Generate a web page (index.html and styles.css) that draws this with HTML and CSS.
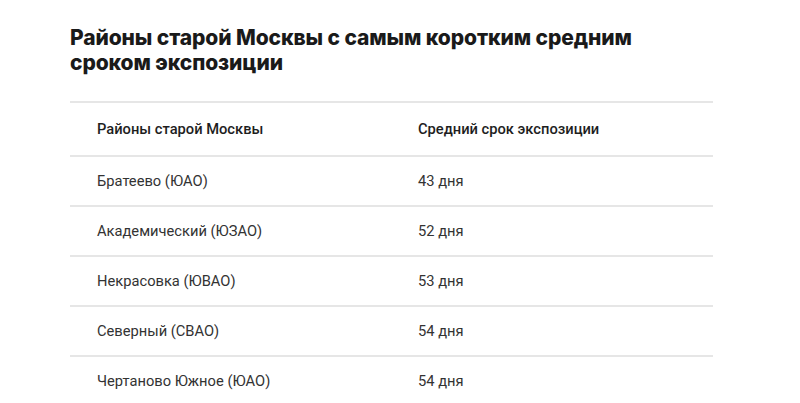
FILE: index.html
```html
<!DOCTYPE html>
<html lang="ru">
<head>
<meta charset="utf-8">
<link rel="stylesheet" href="styles.css">
</head>
<body>
<main class="block">
  <h2 class="title">Районы старой Москвы с самым коротким средним сроком экспозиции</h2>
  <table class="data">
    <colgroup><col class="w1"><col></colgroup>
    <thead>
      <tr><th>Районы старой Москвы</th><th>Средний срок экспозиции</th></tr>
    </thead>
    <tbody>
      <tr><td>Братеево (ЮАО)</td><td>43 дня</td></tr>
      <tr><td>Академический (ЮЗАО)</td><td>52 дня</td></tr>
      <tr><td>Некрасовка (ЮВАО)</td><td>53 дня</td></tr>
      <tr><td>Северный (СВАО)</td><td>54 дня</td></tr>
      <tr><td>Чертаново Южное (ЮАО)</td><td>54 дня</td></tr>
    </tbody>
  </table>
</main>
</body>
</html>
```
FILE: styles.css
```css
html, body {
  margin: 0;
  padding: 0;
  background: #fff;
}
body {
  font-family: Roboto, "Liberation Sans", sans-serif;
  color: #222;
}
.block {
  padding: 25px 87px 0 70px;
}
.title {
  margin: 0 0 26px 0;
  font-family: Inter, "Liberation Sans", sans-serif;
  font-weight: 800;
  font-size: 21px;
  line-height: 25px;
  letter-spacing: -0.1px;
  color: #1a1a1a;
  max-width: 600px;
}
.data {
  width: 643px;
  table-layout: fixed;
  border-collapse: collapse;
  border-top: 2px solid #e6e6e6;
}
.w1 {
  width: 321px;
}
.data th, .data td {
  text-align: left;
  padding: 0 0 0 27px;
  font-size: 14.7px;
  color: #333;
  white-space: nowrap;
}
.data th {
  height: 52px;
  font-weight: 500;
  color: #1e1e1e;
  border-bottom: 2px solid #e6e6e6;
}
.data td {
  height: 48px;
  font-weight: 400;
  border-bottom: 2px solid #e6e6e6;
}
.data tbody tr:last-child td {
  border-bottom: none;
}
```
